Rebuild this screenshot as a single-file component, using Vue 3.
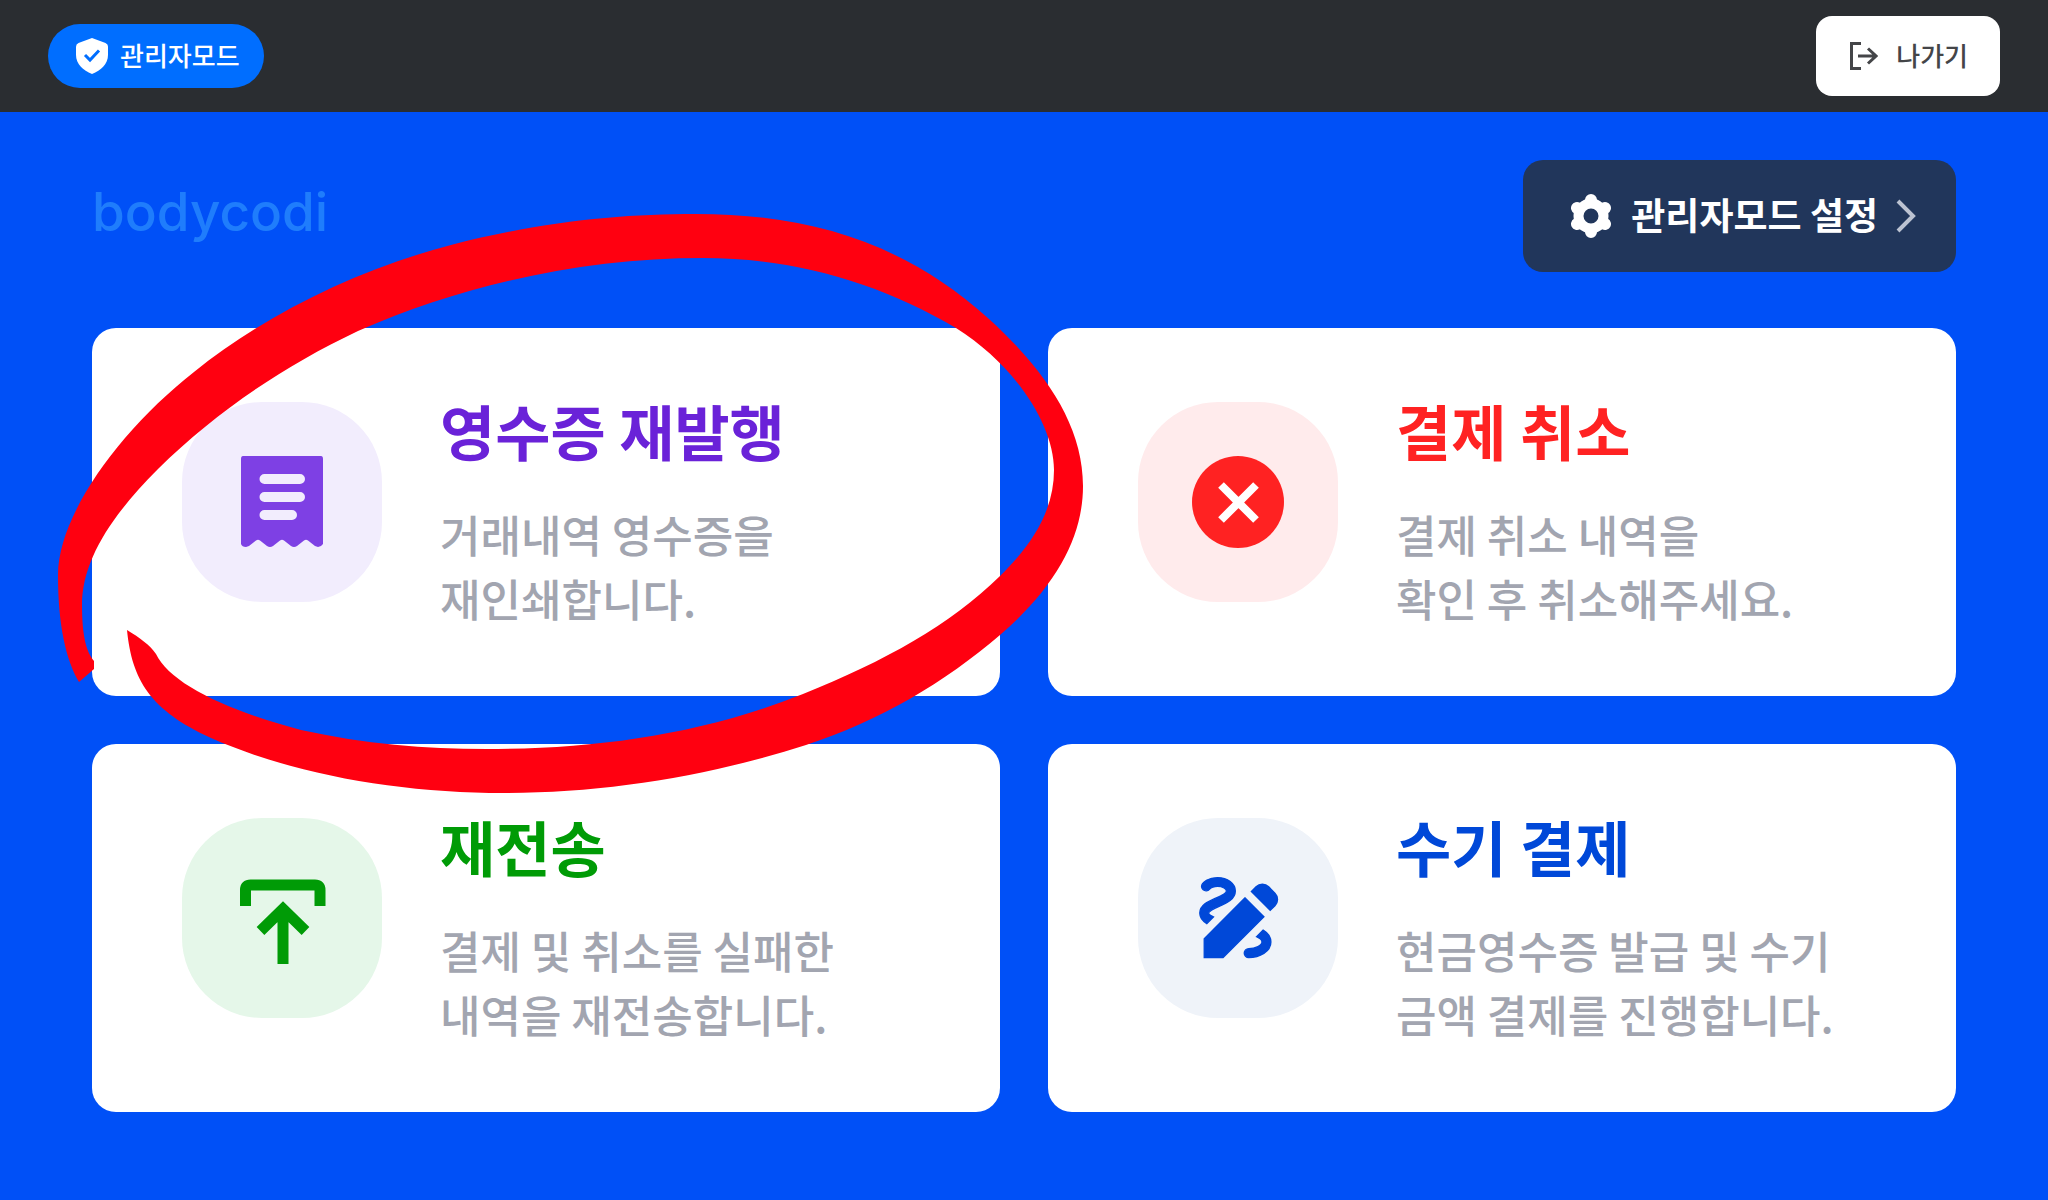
<template>
  <div class="page">
    <header class="topbar">
      <span class="mode-badge">
        <svg class="shield" viewBox="0 0 32 36" aria-hidden="true">
          <path fill="#fff" d="M16 0 29.500 5Q32 6 32 8.500V17C32 26 25 32.500 16 36 7 32.500 0 26 0 17V8.500Q0 6 2.500 5Z" />
          <path fill="none" stroke="#006eff" stroke-width="3" d="m9 17 5 5 9-9.500" />
        </svg>
        <span class="label">관리자모드</span>
      </span>
      <button class="exit" type="button">
        <svg class="exit-icon" viewBox="0 0 30 30" aria-hidden="true">
          <path d="M13 2.500H3.500V27.500H13M10 15H28M20 7.500 28 15 20 22.500" />
        </svg>
        <span class="label">나가기</span>
      </button>
    </header>

    <main class="content">
      <div class="content-head">
        <span class="logo">bodycodi</span>
        <button class="settings" type="button">
          <svg class="gear" viewBox="0 0 44 44" aria-hidden="true">
            <path d="M22 6V38M8 14 36 30M36 14 8 30" />
            <circle cx="22" cy="22" r="12.500" />
          </svg>
          <span class="label">관리자모드 설정</span>
          <svg class="chevron" viewBox="0 0 20 34" aria-hidden="true"><path d="m2 2 15 15L2 32" /></svg>
        </button>
      </div>

      <div class="menu">
        <div v-for="item in menus" :key="item.id" class="cell">
          <button class="card" :class="item.id" type="button">
            <span class="tile">
              <svg v-if="item.id === 'receipt'" viewBox="0 0 200 200" aria-hidden="true">
                <path fill="currentColor" d="M61 54H139Q141 54 141 57V142Q139 145 136 145L133 144 126 138.500Q124 137 122 138.500L115 144Q112 146 109 144L102 138.500Q100 137 98 138.500L91 144Q88 146 85 144L78 138.500Q76 137 74 138.500L67 144 64 145Q60 145 59 142V57Q59 54 61 54Z" />
                <path stroke="#f2edfd" stroke-width="10" stroke-linecap="round" d="M82.500 77H118M82.500 95H118M82.500 113H110" />
              </svg>
              <svg v-else-if="item.id === 'cancel'" viewBox="0 0 200 200" aria-hidden="true">
                <circle cx="100" cy="100" r="46" fill="currentColor" />
                <path stroke="#fff" stroke-width="8" d="m83 83 35 35m0-35-35 35" />
              </svg>
              <svg v-else-if="item.id === 'resend'" viewBox="0 0 200 200" aria-hidden="true">
                <path fill="none" stroke="currentColor" stroke-width="11" d="M63.500 88V72Q63.500 67 68.500 67H133Q138 67 138 72V88M101 146V92M78.500 113 101 91 123.500 113" />
              </svg>
              <svg v-else viewBox="-10.900 -10.400 45 45" aria-hidden="true">
                <path fill="currentColor" stroke="currentColor" stroke-width=".3" d="m18.850 10.390 1.060-1.060c.78-.78.78-2.050 0-2.830L18.500 5.090c-.78-.78-2.050-.78-2.830 0l-1.060 1.060zm-5.660-2.830L4 16.760V21h4.240l9.190-9.190zM19 17.500c0 2.190-2.540 3.500-5 3.500-.55 0-1-.45-1-1s.45-1 1-1c1.540 0 3-.73 3-1.500 0-.47-.48-.87-1.230-1.200l1.480-1.480c1.070.63 1.750 1.470 1.750 2.680M4.580 13.350C3.610 12.790 3 12.060 3 11c0-1.800 1.890-2.630 3.560-3.360C7.590 7.180 9 6.560 9 6c0-.41-.78-1-2-1-1.260 0-1.800.61-1.830.64-.35.41-.98.46-1.400.12-.41-.34-.49-.95-.15-1.380C3.730 4.240 4.760 3 7 3s4 1.320 4 3c0 1.870-1.930 2.720-3.640 3.470C6.420 9.880 5 10.500 5 11c0 .31.43.6 1.070.86z" />
              </svg>
            </span>
            <span class="text">
              <strong class="title">{{ item.title }}</strong>
              <span v-for="line in item.lines" :key="line" class="line">{{ line }}</span>
            </span>
          </button>
          <svg v-if="item.marked" class="marker" viewBox="92 328 908 368" preserveAspectRatio="none" aria-hidden="true">
            <path :d="markerPath" />
          </svg>
        </div>
      </div>
    </main>
  </div>
</template>

<script setup>
const menus = [
  { id: 'receipt', title: '영수증 재발행', lines: ['거래내역 영수증을', '재인쇄합니다.'], marked: true },
  { id: 'cancel', title: '결제 취소', lines: ['결제 취소 내역을', '확인 후 취소해주세요.'] },
  { id: 'resend', title: '재전송', lines: ['결제 및 취소를 실패한', '내역을 재전송합니다.'] },
  { id: 'manual', title: '수기 결제', lines: ['현금영수증 발급 및 수기', '금액 결제를 진행합니다.'] }
];

// brush ring: outer edge clockwise from the left end, then the inner edge back
const markerPath = [
  'M79 682',
  'C66 660 58 625 58 575',
  'C58 515 120 430 194 372',
  'C262 317 355 270 451 245',
  'C545 221 620 214 696 214',
  'C810 214 905 243 989 319',
  'C1045 370 1083 425 1083 486',
  'C1083 535 1058 585 1000 635',
  'C945 682 880 721 806 745',
  'C710 776 605 793 504 793',
  'C400 793 295 775 211 738',
  'C150 710 132 680 127 630',
  'C140 638 150 645 156 654',
  'C170 683 225 710 301 730',
  'C365 744 425 749 486 749',
  'C595 749 700 735 803 694',
  'C885 661 950 625 1000 576',
  'C1035 542 1054 508 1054 470',
  'C1054 425 1015 365 956 328',
  'C880 283 795 258 703 258',
  'C585 258 465 284 358 331',
  'C282 367 215 413 158 469',
  'C112 515 82 560 82 605',
  'C82 635 86 652 94 661',
  'L94 669Z'
].join('');
</script>

<style>
body { background: #0050f7; }
</style>

<style scoped>
.page { min-height: 100vh; background: #0050f7; font-family: "Noto Sans CJK KR", sans-serif; }
button { border: none; font-family: inherit; cursor: pointer; }
svg { display: block; flex: none; }
.label { padding-bottom: 4px; }

.topbar { display: flex; align-items: center; justify-content: space-between; padding: 16px 48px; background: #2a2d31; }
.mode-badge { display: flex; align-items: center; gap: 12px; height: 64px; padding: 0 24px 0 28px; border-radius: 32px; background: #006eff; color: #fff; font-size: 26px; font-weight: 500; }
.shield { width: 32px; height: 36px; }
.exit { display: flex; align-items: center; gap: 18px; height: 80px; padding: 0 32px; border-radius: 16px; background: #fff; color: #444548; font-size: 26px; font-weight: 500; }
.exit-icon { width: 30px; height: 30px; fill: none; stroke: currentColor; stroke-width: 3; }

.content { padding: 48px 92px 88px; }
.content-head { display: flex; align-items: center; justify-content: space-between; margin-bottom: 56px; }
.logo { padding-bottom: 8px; color: #1f7dfc; font-family: Inter, sans-serif; font-size: 53px; font-weight: 500; line-height: 64px; }
.settings { display: flex; align-items: center; gap: 18px; height: 112px; padding: 0 40px 0 46px; border-radius: 20px; background: #21365b; color: #fff; font-size: 37px; font-weight: 700; }
.gear { width: 44px; height: 44px; fill: none; stroke: #fff; stroke-linecap: round; stroke-width: 12; }
.gear circle { fill: #21365b; stroke-width: 10; }
.chevron { width: 20px; height: 34px; fill: none; stroke: #bcc3d2; stroke-width: 4; }

.menu { display: grid; grid-template-columns: 1fr 1fr; gap: 48px; }
.cell { position: relative; }
.card { display: flex; align-items: flex-start; gap: 58px; width: 100%; padding: 70px 40px 66px 90px; border-radius: 24px; background: #fff; text-align: left; }
.tile { flex: none; width: 200px; height: 200px; margin-top: 4px; border-radius: 80px; }
.title { display: block; margin-bottom: 40px; font-size: 60px; font-weight: 700; line-height: 64px; }
.line { display: block; color: #a2a5b0; font-size: 44px; font-weight: 500; line-height: 64px; white-space: nowrap; }
.marker { position: absolute; inset: 0; z-index: 1; width: 100%; height: 100%; overflow: visible; pointer-events: none; fill: #ff0010; }

.receipt .tile { background: #f2edfd; color: #7e40e4; }
.receipt .title { color: #6a22d8; }
.cancel .tile { background: #ffebec; color: #ff2222; }
.cancel .title { color: #ff2222; }
.resend .tile { background: #e5f7e9; color: #009b06; }
.resend .title { color: #009b06; }
.manual .tile { background: #eff3f9; color: #0048d8; }
.manual .title { color: #0048d8; }
</style>
